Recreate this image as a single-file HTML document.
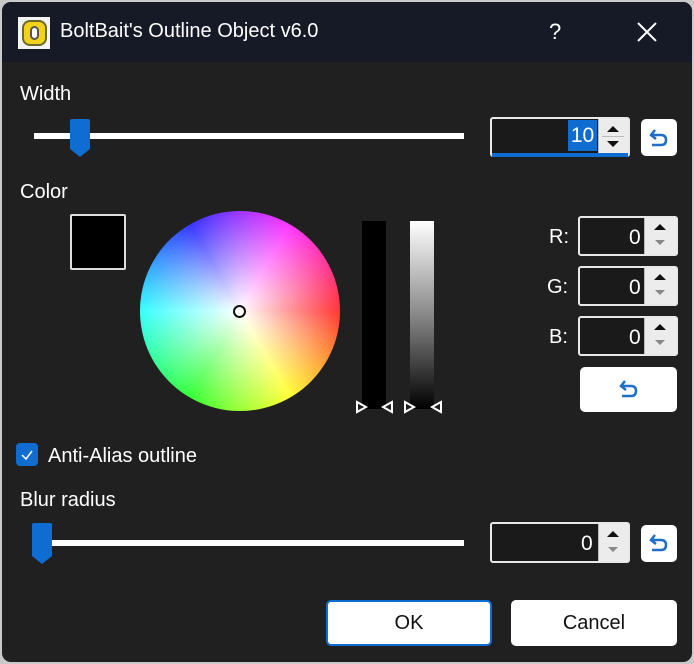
<!DOCTYPE html>
<html><head><meta charset="utf-8"><style>
*{box-sizing:border-box;margin:0;padding:0}
body{width:694px;height:664px;background:#c9c9c9;font-family:"Liberation Sans",sans-serif;position:relative;overflow:hidden}
.win{position:absolute;left:2px;top:2px;width:690px;height:660px;background:#202020;border-radius:9px;overflow:hidden}
.abs{position:absolute}
.title{left:0;top:0;width:690px;height:60px;background:#161a26}
.t{color:#fff;font-size:20px}
.lbl{color:#fff;font-size:20px}
.track{height:6px;background:#fff}
.thumb{background:#0f6cd0;border-radius:3px 3px 0 0}
.num{background:#1a1a1a;border:2px solid #e8e8e8;border-radius:3px}
.spin{background:#ececec;border-left:1px solid #bbb}
.rst{background:#fff;border-radius:5px}
.btn{background:#fff;border-radius:5px;color:#111;font-size:20px;text-align:center}
</style></head><body>
<div class="win">
<div class="abs title"></div>
<div class="abs" style="left:16px;top:15px;width:32px;height:32px;background:#f4f4f4"></div>
<div class="abs" style="left:20px;top:18px;width:25px;height:26px;background:#f2d21a;border:2px solid #6a6a2a;border-radius:8px"></div>
<div class="abs" style="left:28px;top:24px;width:9px;height:14px;background:#fff;border:2px solid #555;border-radius:5px"></div>
<div class="abs t" style="left:58px;top:18px">BoltBait's Outline Object v6.0</div>
<div class="abs t" style="left:547px;top:17px;font-size:22px">?</div>
<svg class="abs" style="left:634px;top:19px" width="22" height="22"><path d="M2 2L20 20M20 2L2 20" stroke="#fff" stroke-width="2"/></svg>

<div class="abs lbl" style="left:18px;top:81px">Width</div>
<div class="abs track" style="left:32px;top:131px;width:430px"></div>
<svg class="abs" style="left:66px;top:116px" width="26" height="40"><path d="M2 3Q2 1 4 1H20Q22 1 22 3V31L12 39L2 31Z" fill="#0f6cd0"/></svg>
<div class="abs num" style="left:488px;top:115px;width:140px;height:40px"></div>
<div class="abs" style="left:490px;top:151px;width:136px;height:4px;background:#0f6cd0"></div>
<div class="abs" style="left:566px;top:118px;width:29px;height:31px;background:#0f6cd0;color:#fff;font-size:21px;text-align:center;line-height:31px">10</div>
<div class="abs spin" style="left:596px;top:117px;width:30px;height:34px"></div>
<svg class="abs" style="left:600px;top:120px" width="22" height="30"><path d="M5 10L11 4L17 10Z M5 19L11 25L17 19Z" fill="#111"/><path d="M0 14.5H22" stroke="#bbb"/></svg>
<div class="abs rst" style="left:639px;top:117px;width:36px;height:37px"></div>

<div class="abs lbl" style="left:18px;top:179px">Color</div>
<div class="abs" style="left:68px;top:212px;width:56px;height:56px;background:#000;border:2px solid #ddd;border-radius:2px"></div>
<div class="abs" style="left:138px;top:209px;width:200px;height:200px;border-radius:50%;background:conic-gradient(hsl(270,100%,50%),hsl(300,100%,50%),hsl(330,100%,50%),hsl(0,100%,50%),hsl(30,100%,50%),hsl(60,100%,50%),hsl(90,100%,50%),hsl(120,100%,50%),hsl(150,100%,50%),hsl(180,100%,50%),hsl(210,100%,50%),hsl(240,100%,50%),hsl(270,100%,50%))"></div>
<div class="abs" style="left:138px;top:209px;width:200px;height:200px;border-radius:50%;background:radial-gradient(circle,rgba(255,255,255,1) 0%,rgba(255,255,255,.6) 35%,rgba(255,255,255,0) 90%)"></div>
<div class="abs" style="left:231px;top:303px;width:13px;height:13px;border:2px solid #111;border-radius:50%"></div>
<div class="abs" style="left:360px;top:219px;width:24px;height:188px;background:#000"></div>
<div class="abs" style="left:408px;top:219px;width:24px;height:188px;background:linear-gradient(#fff,#888 50%,#000)"></div>
<svg class="abs" style="left:352px;top:398px" width="92" height="16"><g fill="none" stroke="#fff" stroke-width="2"><path d="M3 2L12 7L3 12Z"/><path d="M38 2L29 7L38 12Z"/><path d="M51 2L60 7L51 12Z"/><path d="M87 2L78 7L87 12Z"/></g></svg>

<div class="abs lbl" style="left:547px;top:224px">R:</div>
<div class="abs lbl" style="left:545px;top:274px">G:</div>
<div class="abs lbl" style="left:547px;top:324px">B:</div>
<div class="abs num" style="left:576px;top:214px;width:100px;height:40px"></div>
<div class="abs num" style="left:576px;top:264px;width:100px;height:40px"></div>
<div class="abs num" style="left:576px;top:314px;width:100px;height:40px"></div>
<div class="abs lbl" style="left:627px;top:224px;font-size:21px">0</div>
<div class="abs lbl" style="left:627px;top:274px;font-size:21px">0</div>
<div class="abs lbl" style="left:627px;top:324px;font-size:21px">0</div>
<div class="abs spin" style="left:642px;top:216px;width:32px;height:36px"></div>
<div class="abs spin" style="left:642px;top:266px;width:32px;height:36px"></div>
<div class="abs spin" style="left:642px;top:316px;width:32px;height:36px"></div>
<svg class="abs" style="left:646px;top:218px" width="24" height="132"><g fill="#111"><path d="M6 10L12 4L18 10Z M6 60L12 54L18 60Z M6 110L12 104L18 110Z"/></g><g fill="#888"><path d="M7 20L12 25L17 20Z M7 70L12 75L17 70Z M7 120L12 125L17 120Z"/></g></svg>
<div class="abs rst" style="left:578px;top:365px;width:97px;height:45px"></div>

<div class="abs" style="left:14px;top:441px;width:22px;height:23px;background:#0f6cd0;border-radius:4px"></div>
<svg class="abs" style="left:16px;top:444px" width="18" height="18"><path d="M4 9L8 13L14 5" stroke="#fff" stroke-width="1.5" fill="none"/></svg>
<div class="abs lbl" style="left:46px;top:443px">Anti-Alias outline</div>
<div class="abs lbl" style="left:18px;top:487px">Blur radius</div>
<div class="abs track" style="left:32px;top:538px;width:430px"></div>
<svg class="abs" style="left:28px;top:520px" width="24" height="42"><path d="M2 3Q2 1 4 1H20Q22 1 22 3V34L12 42L2 34Z" fill="#0f6cd0"/></svg>
<div class="abs num" style="left:488px;top:520px;width:140px;height:41px"></div>
<div class="abs lbl" style="left:579px;top:530px;font-size:21px">0</div>
<div class="abs spin" style="left:596px;top:522px;width:30px;height:37px"></div>
<svg class="abs" style="left:600px;top:524px" width="22" height="32"><path d="M5 11L11 5L17 11Z" fill="#111"/><path d="M6 21L11 26L16 21Z" fill="#888"/></svg>
<div class="abs rst" style="left:639px;top:523px;width:36px;height:37px"></div>

<svg class="abs" style="left:645px;top:125px" width="24" height="22"><path d="M8 3L4 8L9 12M4 8H14Q19 8 19 13Q19 18 14 18H5" stroke="#1d6fc8" stroke-width="2.5" fill="none"/></svg>
<svg class="abs" style="left:615px;top:376px" width="24" height="22"><path d="M8 3L4 8L9 12M4 8H14Q19 8 19 13Q19 18 14 18H5" stroke="#1d6fc8" stroke-width="2.5" fill="none"/></svg>
<svg class="abs" style="left:645px;top:530px" width="24" height="22"><path d="M8 3L4 8L9 12M4 8H14Q19 8 19 13Q19 18 14 18H5" stroke="#1d6fc8" stroke-width="2.5" fill="none"/></svg>

<div class="abs btn" style="left:324px;top:598px;width:166px;height:46px;border:2px solid #0f6cd0;line-height:42px">OK</div>
<div class="abs btn" style="left:509px;top:598px;width:166px;height:46px;line-height:46px">Cancel</div>
</div>
</body></html>
